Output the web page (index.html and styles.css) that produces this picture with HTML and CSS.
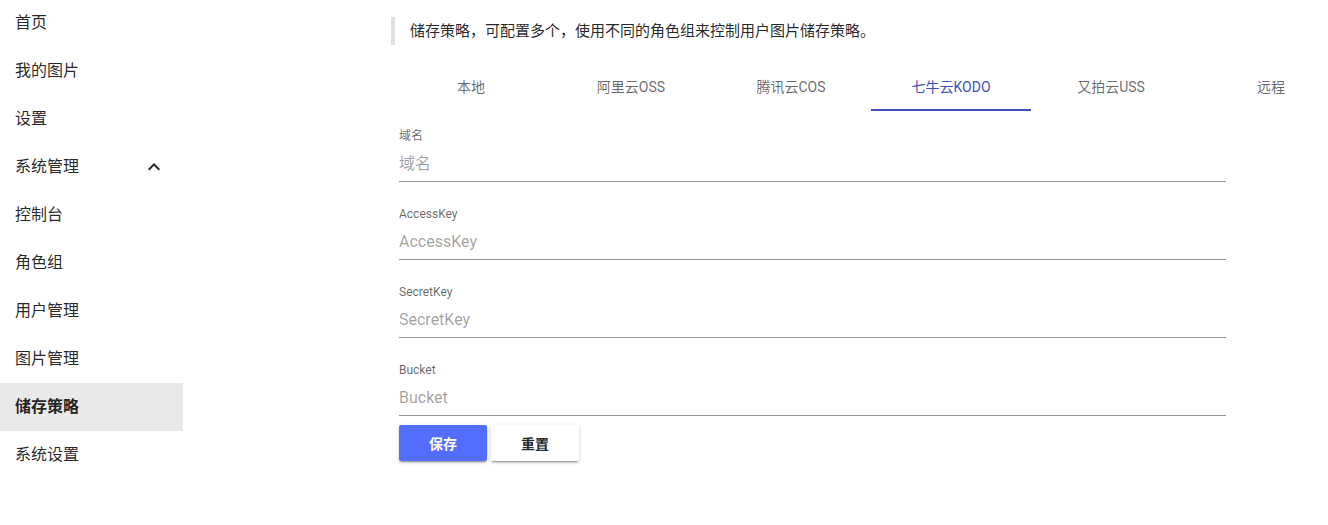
FILE: index.html
```html
<!DOCTYPE html>
<html lang="zh">
<head>
<meta charset="utf-8">
<title>储存策略</title>
<link rel="stylesheet" href="styles.css">
</head>
<body>
<div class="app">
  <nav class="sidebar">
    <div class="item">首页</div>
    <div class="item">我的图片</div>
    <div class="item">设置</div>
    <div class="item group">系统管理
      <svg class="chev" viewBox="0 0 24 24" width="24" height="24"><path d="M12 8l-6 6 1.41 1.41L12 10.83l4.59 4.58L18 14z" fill="rgba(0,0,0,0.87)"/></svg>
    </div>
    <div class="item">控制台</div>
    <div class="item">角色组</div>
    <div class="item">用户管理</div>
    <div class="item">图片管理</div>
    <div class="item active">储存策略</div>
    <div class="item">系统设置</div>
  </nav>
  <main class="main">
    <div class="quote">储存策略，可配置多个，使用不同的角色组来控制用户图片储存策略。</div>
    <div class="tabs">
      <div class="tab">本地</div>
      <div class="tab">阿里云OSS</div>
      <div class="tab">腾讯云COS</div>
      <div class="tab on">七牛云KODO</div>
      <div class="tab">又拍云USS</div>
      <div class="tab">远程</div>
    </div>
    <form class="form">
      <div class="field"><label class="label">域名</label><div class="input">域名</div></div>
      <div class="field"><label class="label">AccessKey</label><div class="input">AccessKey</div></div>
      <div class="field"><label class="label">SecretKey</label><div class="input">SecretKey</div></div>
      <div class="field"><label class="label">Bucket</label><div class="input">Bucket</div></div>
      <div class="actions">
        <button type="button" class="btn primary">保存</button>
        <button type="button" class="btn">重置</button>
      </div>
    </form>
  </main>
</div>
</body>
</html>
```

FILE: styles.css
```css
html, body {
  margin: 0;
  padding: 0;
  background: #fff;
  overflow: hidden;
}
body {
  font-family: Roboto, "Noto Sans CJK SC", sans-serif;
  color: rgba(0,0,0,0.87);
  width: 1328px;
  height: 525px;
}
.app {
  display: flex;
  align-items: flex-start;
}
.sidebar {
  width: 183px;
  flex: none;
  margin-top: -1px;
}
.item {
  position: relative;
  height: 48px;
  line-height: 47px;
  padding-left: 15px;
  font-size: 16px;
}
.item.active {
  background: #e9e9e9;
  font-weight: 700;
}
.chev {
  position: absolute;
  left: 142px;
  top: 12px;
}
.main {
  flex: none;
  margin-left: 208px;
  width: 960px;
}
.quote {
  margin-top: 17px;
  height: 28px;
  line-height: 29px;
  border-left: 4px solid #e0e0e0;
  padding-left: 15px;
  font-size: 15px;
  color: rgba(0,0,0,0.87);
}
.tabs {
  display: flex;
  margin-top: 18px;
  height: 48px;
}
.tab {
  flex: none;
  width: 160px;
  height: 48px;
  line-height: 49px;
  text-align: center;
  font-size: 14px;
  color: rgba(0,0,0,0.6);
  box-sizing: border-box;
}
.tab.on {
  color: #3f51b5;
  border-bottom: 2px solid #3f51b5;
}
.form {
  margin: 0;
  padding: 17px 0 0 8px;
  width: 827px;
  display: flex;
  flex-direction: column;
  gap: 24px;
}
.field {
  display: flex;
  flex-direction: column;
}
.label {
  font-size: 12px;
  line-height: 17px;
  height: 16px;
  color: rgba(0,0,0,0.6);
}
.input {
  margin-top: 8px;
  line-height: 24px;
  padding-bottom: 5px;
  font-size: 16px;
  color: rgba(0,0,0,0.38);
  border-bottom: 1px solid rgba(0,0,0,0.42);
}
.actions {
  margin-top: -15px;
  display: flex;
  gap: 4px;
}
.btn {
  width: 88px;
  height: 36px;
  border: none;
  border-radius: 2px;
  background: #fff;
  font-family: Roboto, "Noto Sans CJK SC", sans-serif;
  font-size: 14px;
  font-weight: 700;
  color: rgba(0,0,0,0.87);
  box-shadow: 0 3px 1px -2px rgba(0,0,0,0.2), 0 2px 2px 0 rgba(0,0,0,0.14), 0 1px 5px 0 rgba(0,0,0,0.12);
  padding: 0;
}
.btn.primary {
  background: #536dfe;
  color: #fff;
}
```
